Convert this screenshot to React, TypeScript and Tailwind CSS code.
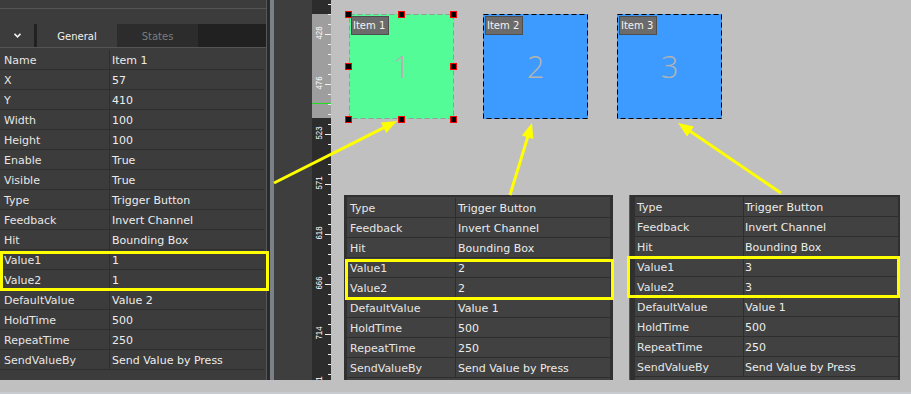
import React from "react";

type Row = [string, string];

const leftRows: Row[] = [
  ["Name", "Item 1"],
  ["X", "57"],
  ["Y", "410"],
  ["Width", "100"],
  ["Height", "100"],
  ["Enable", "True"],
  ["Visible", "True"],
  ["Type", "Trigger Button"],
  ["Feedback", "Invert Channel"],
  ["Hit", "Bounding Box"],
  ["Value1", "1"],
  ["Value2", "1"],
  ["DefaultValue", "Value 2"],
  ["HoldTime", "500"],
  ["RepeatTime", "250"],
  ["SendValueBy", "Send Value by Press"],
];

const tailRows = (v: string): Row[] => [
  ["Type", "Trigger Button"],
  ["Feedback", "Invert Channel"],
  ["Hit", "Bounding Box"],
  ["Value1", v],
  ["Value2", v],
  ["DefaultValue", "Value 1"],
  ["HoldTime", "500"],
  ["RepeatTime", "250"],
  ["SendValueBy", "Send Value by Press"],
];

function PropTable({
  rows,
  labelCls,
  valueCls,
}: {
  rows: Row[];
  labelCls: string;
  valueCls: string;
}) {
  return (
    <div className="flex flex-col">
      {rows.map(([k, v]) => (
        <div key={k} className="flex h-[20px] overflow-hidden border-b border-[#2e2e2e]">
          <div
            className={`${labelCls} shrink-0 border-r border-[#2e2e2e] leading-[21px] text-[#e6e6e6] whitespace-nowrap`}
          >
            {k}
          </div>
          <div className={`flex-1 ${valueCls} leading-[21px] text-[#ececec] whitespace-nowrap`}>{v}</div>
        </div>
      ))}
    </div>
  );
}

function Ruler() {
  const ticks: number[] = [];
  for (let y = 4; y < 392; y += 10) ticks.push(y);
  const labels = ["428", "476", "523", "571", "618", "666", "714", "761"];
  return (
    <svg width={19} height={380} className="block">
      <rect x={0} y={0} width={19} height={380} fill="#2c2c2c" />
      <rect x={0} y={14} width={19} height={104} fill="#9e9e9e" />
      <line x1={0} y1={103.5} x2={19} y2={103.5} stroke="#22dd22" strokeWidth={1} />
      {ticks.map((y) => {
        const major = (y - 34) % 50 === 0 && y >= 34;
        return (
          <line
            key={y}
            x1={major ? 13 : 16}
            y1={y + 0.5}
            x2={19}
            y2={y + 0.5}
            stroke="#f2f2f2"
            strokeWidth={1}
          />
        );
      })}
      {labels.map((t, i) => {
        const cy = 33 + i * 50;
        const cx = 7;
        return (
          <text
            key={t}
            x={cx}
            y={cy}
            transform={`rotate(-90 ${cx} ${cy})`}
            textAnchor="middle"
            dominantBaseline="central"
            fontSize={9}
            fontFamily="'Liberation Sans', sans-serif"
            fill="#ffffff"
            textLength={13}
            lengthAdjust="spacingAndGlyphs"
          >
            {t}
          </text>
        );
      })}
    </svg>
  );
}

function Item({
  posCls,
  bgCls,
  stroke,
  label,
  num,
  selected,
}: {
  posCls: string;
  bgCls: string;
  stroke: string;
  label: string;
  num: string;
  selected?: boolean;
}) {
  const handles = [
    "left-[-4px] top-[-3px]",
    "left-[49px] top-[-3px]",
    "left-[101px] top-[-3px]",
    "left-[-4px] top-[49px]",
    "left-[101px] top-[49px]",
    "left-[-4px] top-[102px]",
    "left-[49px] top-[102px]",
    "left-[101px] top-[102px]",
  ];
  return (
    <div className={`absolute top-[14px] h-[105px] w-[105px] ${posCls} ${bgCls}`}>
      <svg width={105} height={105} className="absolute inset-0">
        <rect
          x={0.5}
          y={0.5}
          width={104}
          height={104}
          fill="none"
          stroke={stroke}
          strokeWidth={1}
          strokeDasharray="5 3"
        />
      </svg>
      <div className="absolute inset-0 flex items-center justify-center font-['Open_Sans',sans-serif] text-[31px] font-light leading-none text-[#b3b3b3]">
        {num}
      </div>
      <div className="absolute left-[2px] top-[2px] flex h-[19px] w-[38px] items-center border border-[#4e4e4e] bg-[#6b6b6b] pl-[1px] text-[10px] text-[#f4f4f4] whitespace-nowrap">
        {label}
      </div>
      {selected &&
        handles.map((h) => (
          <div key={h} className={`absolute h-[7px] w-[7px] border border-[#ff0000] bg-black ${h}`} />
        ))}
    </div>
  );
}

function Arrow({ x1, y1, x2, y2 }: { x1: number; y1: number; x2: number; y2: number }) {
  const dx = x2 - x1;
  const dy = y2 - y1;
  const len = Math.hypot(dx, dy);
  const ux = dx / len;
  const uy = dy / len;
  const head = 15;
  const half = 6;
  const bx = x2 - ux * head;
  const by = y2 - uy * head;
  const px = -uy;
  const py = ux;
  const pts = `${x2},${y2} ${bx + px * half},${by + py * half} ${bx - px * half},${by - py * half}`;
  return (
    <g>
      <line x1={x1} y1={y1} x2={bx + ux * 2} y2={by + uy * 2} stroke="#ffff00" strokeWidth={3} />
      <polygon points={pts} fill="#ffff00" />
    </g>
  );
}

export default function App() {
  return (
    <div className="relative h-[394px] w-[911px] overflow-hidden bg-[#c0c0c0] font-['DejaVu_Sans',sans-serif] text-[11px]">
      <div className="flex h-[380px]">
        {/* Left property panel */}
        <div className="flex w-[267px] shrink-0 flex-col border-r border-[#575757] bg-[#3c3c3c]">
          <div className="h-[24px]">
            <div className="h-[9px] border-b border-[#545454] bg-[#3c3c3c]" />
          </div>
          <div className="flex h-[23px] bg-[#212121]">
            <div className="flex w-[34px] items-center justify-center bg-[#3c3c3c]">
              <svg width={7} height={5} viewBox="0 0 7 5">
                <path d="M0.5 0.8 L3.5 3.8 L6.5 0.8" fill="none" stroke="#f0f0f0" strokeWidth={1.6} />
              </svg>
            </div>
            <div className="w-[3px]" />
            <div className="flex w-[80px] items-center justify-center bg-[#3c3c3c] pt-[2px] text-[10px] text-[#f2f2f2]">
              General
            </div>
            <div className="flex w-[81px] items-center justify-center bg-[#2c2c2c] pt-[2px] text-[10px] text-[#7c7c7c]">
              States
            </div>
            <div className="flex-1" />
          </div>
          <div className="flex-1 border-t border-[#545454] pt-[2px]">
            <div className="mr-[2px]">
              <PropTable rows={leftRows} labelCls="w-[110px] pl-[4px]" valueCls="pl-[2px]" />
            </div>
          </div>
        </div>
        {/* splitter */}
        <div className="w-[3px] shrink-0 bg-[#2a2a2a]" />
        <div className="w-[4px] shrink-0 bg-[#7b8089]" />
        <div className="w-[38px] shrink-0 bg-[#3e3e3e]" />
        {/* ruler */}
        <div className="w-[19px] shrink-0">
          <Ruler />
        </div>
        {/* canvas */}
        <div className="relative flex-1 overflow-hidden bg-[#c0c0c0]">
          <Item posCls="left-[18px]" bgCls="bg-[#54fc98]" stroke="#9a9a9a" label="Item 1" num="1" selected />
          <Item posCls="left-[152px]" bgCls="bg-[#3d9bff]" stroke="#000000" label="Item 2" num="2" />
          <Item posCls="left-[286px]" bgCls="bg-[#3d9bff]" stroke="#000000" label="Item 3" num="3" />

          <div className="absolute left-[13px] top-[195px] h-[190px] w-[269px] border-l-[3px] border-t-[2px] border-r-[3px] border-[#303030] bg-[#414141] pt-[1px]">
            <PropTable rows={tailRows("2")} labelCls="w-[109px] pl-[3px]" valueCls="pl-[2px]" />
          </div>
          <div className="absolute left-[298px] top-[195px] h-[190px] w-[271px] border-l border-[#595959] bg-[#303030] pl-[5px] pr-[2px] pt-[1px]">
            <div className="h-full border-t border-[#2e2e2e] bg-[#414141]">
              <PropTable rows={tailRows("3")} labelCls="w-[109px] pl-[2px]" valueCls="pl-[1px]" />
            </div>
          </div>
        </div>
      </div>
      <div className="h-[12px] bg-[#c0c0c0]" />
      <div className="h-[2px] bg-[#c8cbd0]" />

      {/* highlight boxes */}
      <div className="pointer-events-none absolute left-0 top-[251px] h-[40px] w-[269px] border-[3px] border-[#ffff00]" />
      <div className="pointer-events-none absolute left-[345px] top-[259px] h-[41px] w-[269px] border-[3px] border-[#ffff00]" />
      <div className="pointer-events-none absolute left-[627px] top-[256px] h-[42px] w-[273px] border-[3px] border-[#ffff00]" />

      {/* arrows */}
      <svg width={911} height={394} className="pointer-events-none absolute left-0 top-0">
        <Arrow x1={274} y1={183} x2={397} y2={121} />
        <Arrow x1={510} y1={195} x2={532} y2={123} />
        <Arrow x1={781} y1={193} x2={678} y2={123} />
      </svg>
    </div>
  );
}
